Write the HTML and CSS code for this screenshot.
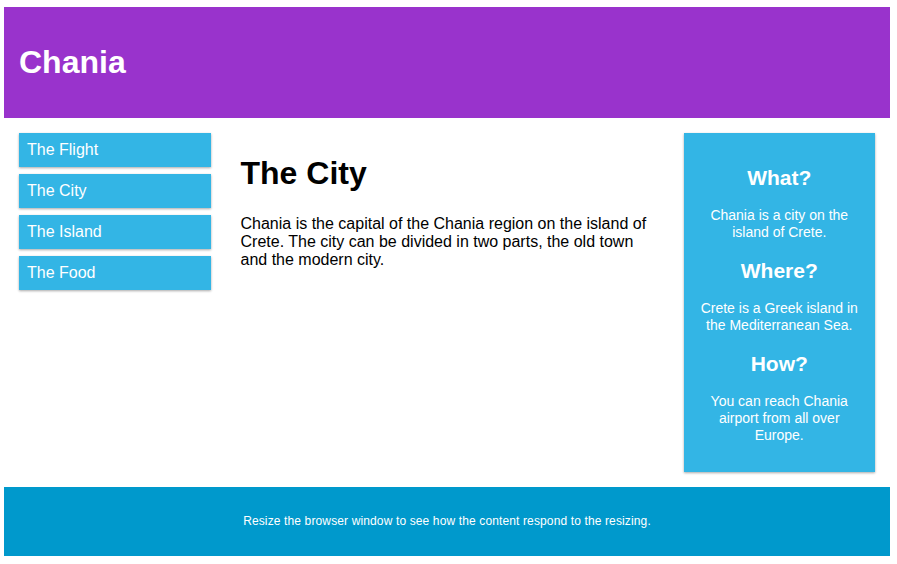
FILE: index.html
```
<!DOCTYPE html>
<html>
<head>
<meta charset="utf-8">
<link rel="stylesheet" href="styles.css">
</head>
<body>
<div class="header">
  <h1>Chania</h1>
</div>
<div class="row">
  <div class="col col-3 menu">
    <ul>
      <li>The Flight</li>
      <li>The City</li>
      <li>The Island</li>
      <li>The Food</li>
    </ul>
  </div>
  <div class="col col-6">
    <h1>The City</h1>
    <p>Chania is the capital of the Chania region on the island of Crete. The city can be divided in two parts, the old town and the modern city.</p>
  </div>
  <div class="col col-3">
    <div class="aside">
      <h2>What?</h2>
      <p>Chania is a city on the island of Crete.</p>
      <h2>Where?</h2>
      <p>Crete is a Greek island in the Mediterranean Sea.</p>
      <h2>How?</h2>
      <p>You can reach Chania airport from all over Europe.</p>
    </div>
  </div>
</div>
<div class="footer">
  <p>Resize the browser window to see how the content respond to the resizing.</p>
</div>
</body>
</html>
```
FILE: styles.css
```
* { box-sizing: border-box; }
html { font-family: "Liberation Sans", Arial, sans-serif; }
body { margin: 7px 7px 8px 4px; }
.header {
  background-color: #9933cc;
  color: #ffffff;
  padding: 15px;
}
.header h1 { margin: 22px 0; font-size: 32px; }
.row { display: flex; align-items: flex-start; }
.col { padding: 15px; }
.col-3 { width: 25%; }
.col-6 { width: 50%; }
.col-6 h1 { font-size: 32px; margin: 22px 0 23px; }
.col-6 p { font-size: 16px; margin: 16px 0; }
.menu ul { list-style-type: none; margin: 0; padding: 0; }
.menu li {
  padding: 8px;
  margin-bottom: 7px;
  background-color: #33b5e5;
  color: #ffffff;
  box-shadow: 0 1px 3px rgba(0,0,0,0.12), 0 1px 2px rgba(0,0,0,0.24);
}
.aside {
  background-color: #33b5e5;
  padding: 15px;
  color: #ffffff;
  text-align: center;
  font-size: 14px;
  box-shadow: 0 1px 3px rgba(0,0,0,0.12), 0 1px 2px rgba(0,0,0,0.24);
}
.aside h2 { font-size: 21px; line-height: 25px; margin: 17px 0; }
.aside p { margin: 14px 0; line-height: 17px; }
.aside p:last-child { margin-bottom: 13px; }
.footer {
  background-color: #0099cc;
  color: #ffffff;
  text-align: center;
  font-size: 12px;
  padding: 15px;
}
.footer p { margin: 12px 0; line-height: 15px; letter-spacing: 0.13px; }
```
